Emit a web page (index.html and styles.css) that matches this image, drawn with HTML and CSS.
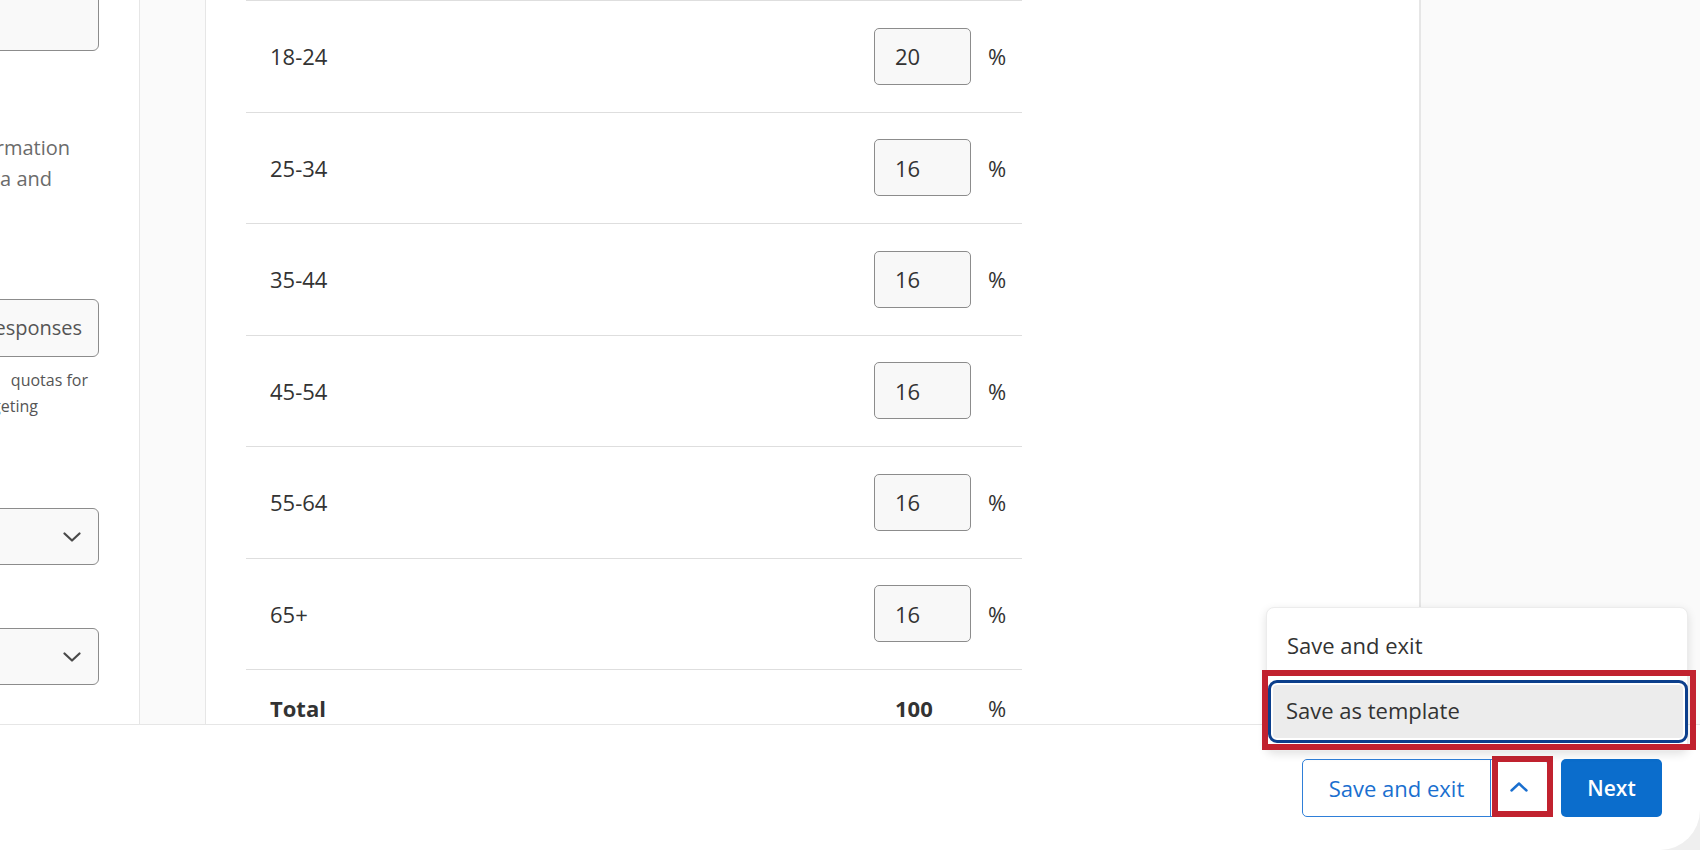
FILE: index.html
```html
<!DOCTYPE html>
<html lang="en">
<head>
<meta charset="utf-8">
<title>Quota targets</title>
<link rel="stylesheet" href="styles.css">
</head>
<body>
<div class="modal">
  <div class="workspace">
    <aside class="side">
      <div class="side-inner">
        <div class="field"></div>
        <p class="desc">
          <span class="ln ln1">Set quota targets using demographic information</span>
          <span class="ln ln2">from your panel or census data and</span>
        </p>
        <button class="ghost-btn">Use a template for responses</button>
        <p class="hint">
          <span class="ln ln3">We will automatically create&emsp;quotas for</span>
          <span class="ln ln4">your targeting</span>
        </p>
        <div class="select"><svg class="chev" viewBox="0 0 18 10" width="18" height="10"><path d="M1.5 1.5 L9 8.5 L16.5 1.5" fill="none" stroke="#4a4a4a" stroke-width="2.2" stroke-linecap="round" stroke-linejoin="round"/></svg></div>
        <div class="select second"><svg class="chev" viewBox="0 0 18 10" width="18" height="10"><path d="M1.5 1.5 L9 8.5 L16.5 1.5" fill="none" stroke="#4a4a4a" stroke-width="2.2" stroke-linecap="round" stroke-linejoin="round"/></svg></div>
      </div>
    </aside>
    <div class="gutter"></div>
    <main class="main">
      <div class="table">
        <div class="row"><span class="label">18-24</span><input class="pct-input" type="text" value="20" readonly><span class="pct">%</span></div>
        <div class="row"><span class="label">25-34</span><input class="pct-input" type="text" value="16" readonly><span class="pct">%</span></div>
        <div class="row"><span class="label">35-44</span><input class="pct-input" type="text" value="16" readonly><span class="pct">%</span></div>
        <div class="row"><span class="label">45-54</span><input class="pct-input" type="text" value="16" readonly><span class="pct">%</span></div>
        <div class="row"><span class="label">55-64</span><input class="pct-input" type="text" value="16" readonly><span class="pct">%</span></div>
        <div class="row"><span class="label">65+</span><input class="pct-input" type="text" value="16" readonly><span class="pct">%</span></div>
        <div class="row total"><span class="label">Total</span><span class="sum">100</span><span class="pct">%</span></div>
      </div>
    </main>
    <div class="rail"></div>
  </div>
  <footer class="footer">
    <div class="actions">
      <div class="split">
        <button class="split-main">Save and exit</button>
        <button class="split-toggle"><svg viewBox="0 0 18 10" width="18" height="10"><path d="M1.5 8.5 L9 1.5 L16.5 8.5" fill="none" stroke="#1a6fcf" stroke-width="2.4" stroke-linecap="round" stroke-linejoin="round"/></svg></button>
      </div>
      <button class="next-btn">Next</button>
      <div class="mark mark-toggle"></div>
      <div class="menu">
        <div class="menu-item">Save and exit</div>
        <div class="menu-item focused">Save as template</div>
        <div class="mark mark-item"></div>
      </div>
    </div>
  </footer>
</div>
</body>
</html>
```

FILE: styles.css
```css
* { box-sizing: border-box; }

html, body {
  margin: 0;
  padding: 0;
}

body {
  width: 1700px;
  height: 850px;
  background: #efefef;
  font-family: "Open Sans", "Liberation Sans", sans-serif;
  color: #333333;
  overflow: hidden;
}

.modal {
  width: 1700px;
  height: 850px;
  background: #ffffff;
  border-bottom-right-radius: 40px;
  overflow: hidden;
  display: flex;
  flex-direction: column;
}

.workspace {
  height: 724px;
  display: flex;
  overflow: hidden;
  flex: none;
}

/* ---------- left settings panel (scrolled, clipped) ---------- */
.side {
  width: 139px;
  flex: none;
  display: flex;
  justify-content: flex-end;
  overflow: hidden;
}

.side-inner {
  flex: 0 0 420px;
  padding-right: 40px;
  margin-top: -6px;
  display: flex;
  flex-direction: column;
}

.field {
  height: 57px;
  border: 1px solid #8c8c8c;
  border-radius: 6px;
  background: #f9f9f9;
}

.ln {
  display: block;
  white-space: nowrap;
  text-align: right;
}

.desc {
  margin: 81px 0 0;
  font-size: 20px;
  line-height: 31px;
  color: #6b6b6b;
}

.ln1 { padding-right: 29px; }
.ln2 { padding-right: 47px; }

.ghost-btn {
  margin-top: 105px;
  height: 58px;
  border: 1px solid #8c8c8c;
  border-radius: 6px;
  background: #f9f9f9;
  font-family: inherit;
  font-size: 20px;
  color: #555555;
  text-align: right;
  padding: 0 16px 2px 0;
  white-space: nowrap;
  overflow: hidden;
}

.hint {
  margin: 10px 0 0;
  font-size: 16px;
  line-height: 26px;
  color: #555555;
}

.ln3 { padding-right: 11px; }
.ln4 { padding-right: 61px; }

.select {
  margin-top: 89px;
  height: 57px;
  border: 1px solid #8c8c8c;
  border-radius: 6px;
  background: #f9f9f9;
  display: flex;
  align-items: center;
  justify-content: flex-end;
  padding-right: 17px;
}

.select.second { margin-top: 63px; }

.chev { display: block; }

/* ---------- gutters ---------- */
.gutter {
  width: 67px;
  flex: none;
  background: #fafafa;
  border-left: 1px solid #e6e6e6;
  border-right: 1px solid #e6e6e6;
}

.rail {
  width: 281px;
  flex: none;
  background: #fafafa;
  border-left: 2px solid #e6e6e6;
}

/* ---------- main table ---------- */
.main {
  flex: 1;
  background: #ffffff;
  padding-left: 40px;
}

.table {
  width: 776px;
}

.row {
  height: 111.5px;
  border-top: 1px solid #dedede;
  display: flex;
  align-items: center;
  padding: 0 16px 0 24px;
  font-size: 22px;
  color: #333333;
}

.label {
  flex: 1;
}

.pct-input {
  width: 97px;
  height: 57px;
  border: 1px solid #8c8c8c;
  border-radius: 5px;
  background: #f8f8f8;
  padding: 0 0 0 20px;
  font-family: inherit;
  font-size: 22px;
  color: #333333;
  outline: none;
}

.pct {
  margin-left: 17px;
  width: 18px;
  text-align: right;
}

.row.total {
  height: 76px;
  font-weight: 700;
}

.sum {
  width: 97px;
  padding-left: 21px;
}

.total .pct { font-weight: 400; }

/* ---------- footer ---------- */
.footer {
  flex: 1;
  border-top: 1px solid #e6e6e6;
  display: flex;
  justify-content: flex-end;
  padding: 34px 38px 0 0;
}

.actions {
  position: relative;
  display: flex;
  align-items: flex-start;
  gap: 13px;
  height: 58px;
}

.split {
  display: flex;
  height: 58px;
  border: 1px solid #2f7fd8;
  border-radius: 5px;
  background: #ffffff;
}

.split-main {
  width: 188px;
  border: none;
  border-right: 1px solid #2f7fd8;
  background: transparent;
  font-family: inherit;
  font-size: 22px;
  color: #1a6fcf;
  padding: 0;
}

.split-toggle {
  width: 56px;
  border: none;
  background: transparent;
  display: flex;
  align-items: center;
  justify-content: center;
  padding: 0 0 2px;
}

.next-btn {
  width: 101px;
  height: 58px;
  border: none;
  border-radius: 5px;
  background: #0b6dcc;
  color: #ffffff;
  font-family: inherit;
  font-size: 21px;
  font-weight: 600;
  padding: 0;
}

/* ---------- dropdown menu (overlay) ---------- */
.menu {
  position: absolute;
  left: -36px;
  top: -152px;
  width: 422px;
  padding: 7px 0 7px;
  background: #ffffff;
  border: 1px solid #ececec;
  border-radius: 8px;
  box-shadow: 0 3px 10px rgba(0, 0, 0, 0.12);
}

.menu-item {
  height: 60px;
  display: flex;
  align-items: center;
  padding-left: 20px;
  font-size: 22px;
  color: #333333;
}

.menu-item.focused {
  height: 63px;
  margin: 5px -1px 0 1px;
  padding: 0 0 3px 15px;
  background: #ececec;
  border: 3px solid #0c3f8c;
  border-radius: 9px;
  box-shadow: inset 0 0 0 2px #ffffff;
}

/* ---------- red annotation boxes ---------- */
.mark {
  position: absolute;
  border: 6px solid #c1222f;
  pointer-events: none;
}

.mark-item {
  left: -5px;
  top: 62px;
  width: 434px;
  height: 80px;
}

.mark-toggle {
  left: 190px;
  top: -3px;
  width: 61px;
  height: 61px;
}
```
